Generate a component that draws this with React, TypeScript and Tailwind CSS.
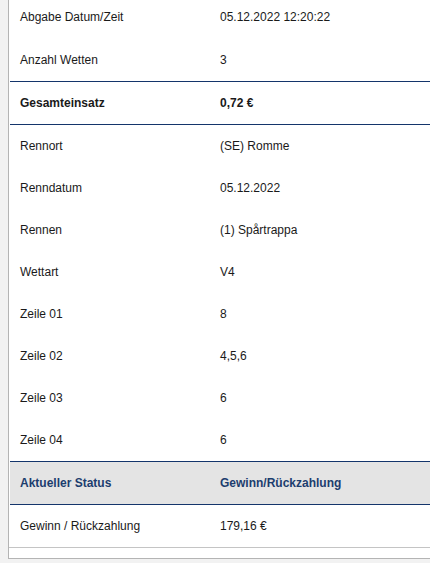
const rows: [string, string][] = [
  ["Rennort", "(SE) Romme"],
  ["Renndatum", "05.12.2022"],
  ["Rennen", "(1) Spårtrappa"],
  ["Wettart", "V4"],
  ["Zeile 01", "8"],
  ["Zeile 02", "4,5,6"],
  ["Zeile 03", "6"],
  ["Zeile 04", "6"],
];

function Row({ label, value, className = "" }: { label: string; value: string; className?: string }) {
  return (
    <div className={`flex items-center h-[42px] ${className}`}>
      <div className="w-[200px] pl-[10px]">{label}</div>
      <div className="pl-[10px]">{value}</div>
    </div>
  );
}

export default function App() {
  return (
    <div className="bg-[#f2f2f2] h-[563px] overflow-hidden pl-[8px] font-['Liberation_Sans',Arial,sans-serif] text-[12px] text-[#1a1a1a]">
      <div className="bg-white border-l border-b border-[#b4b4b4] -mt-[4px] pb-[10px]">
        <div className="border-b border-[#c4c4c4] pl-[1px]">
          <Row label="Abgabe Datum/Zeit" value="05.12.2022 12:20:22" />
          <Row label="Anzahl Wetten" value="3" className="h-[43px]" />
          <div className="border-y border-[#14356b]">
            <Row label="Gesamteinsatz" value="0,72 €" className="font-bold" />
          </div>
          {rows.map(([l, v]) => (
            <Row key={l} label={l} value={v} />
          ))}
          <div className="border-y border-[#14356b] bg-[#e4e4e4] text-[#1c3d6e] font-bold">
            <Row label="Aktueller Status" value="Gewinn/Rückzahlung" />
          </div>
          <Row label="Gewinn / Rückzahlung" value="179,16 €" />
        </div>
      </div>
    </div>
  );
}
